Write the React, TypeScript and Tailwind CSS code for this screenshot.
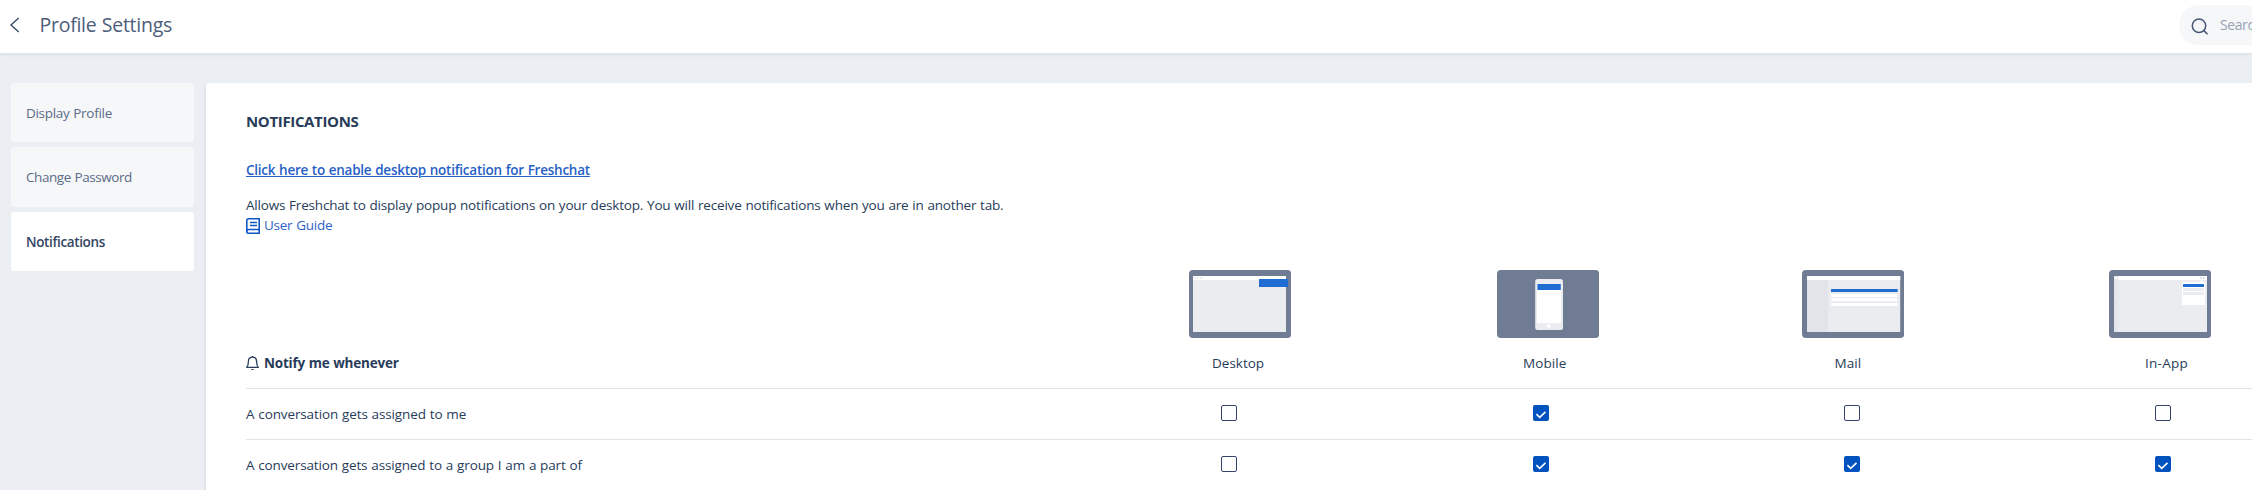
import type { ReactNode } from "react";

function Frame({ children }: { children: ReactNode }) {
  return (
    <svg width="102.3" height="68" viewBox="0 0 102.3 68" className="block shrink-0">
      <rect width="102.3" height="68" rx="4" fill="#6f7c93" />
      {children}
    </svg>
  );
}

function DesktopPreview() {
  return (
    <Frame>
      <rect x="4" y="6" width="93" height="56" fill="#ebecf0" />
      <rect x="4" y="6" width="93" height="4" fill="#fff" />
      <path d="M5 7h2v2h-2zM8 7h2v2h-2zM11 7h2v2h-2z" fill="#ebecf0" />
      <rect x="70" y="9" width="29" height="8" rx="0.6" fill="#1f6dd2" />
    </Frame>
  );
}

function MobilePreview() {
  return (
    <Frame>
      <rect x="38.2" y="9" width="27.8" height="51" rx="2.5" fill="#ebecf0" />
      <rect x="40" y="14" width="24" height="39" rx="1" fill="#fff" />
      <rect x="40.4" y="14" width="23.4" height="6" fill="#1f6dd2" />
      <circle cx="51.8" cy="56" r="2" fill="#fff" />
    </Frame>
  );
}

function MailPreview() {
  return (
    <Frame>
      <rect x="5" y="6" width="93.2" height="56" fill="#ebecf0" />
      <rect x="5" y="10" width="21.3" height="52" fill="#e1e4e9" />
      <rect x="5" y="6" width="93.2" height="4" fill="#fff" />
      <rect x="29" y="19" width="66.7" height="3" rx="0.5" fill="#1f6dd2" />
      <path d="M29.3 24h66v3h-66zM29.3 28.3h66v2.8h-66zM29.3 33h66v3h-66z" fill="#fff" />
    </Frame>
  );
}

function InAppPreview() {
  return (
    <Frame>
      <rect x="5" y="6" width="93" height="56" fill="#ebecf0" />
      <rect x="5" y="6" width="4" height="56" fill="#e4e6eb" />
      <rect x="9" y="6" width="89" height="4" fill="#fff" />
      <rect x="6" y="7" width="2" height="2" fill="#fff" />
      <path d="M6 14h2v2h-2zM6 20h2v2h-2zM6 26h2v2h-2z" fill="#ebecf0" />
      <path d="M91 7h2v2h-2zM94 7h2v2h-2z" fill="#dfe1e6" />
      <path d="M73 12h17.5l1.7-2 1.7 2H96v23H73z" fill="#fff" />
      <rect x="74" y="14" width="21" height="3" rx="0.5" fill="#1f6dd2" />
      <path d="M74 18h21v3h-21zM74 22h21v3h-21z" fill="#ebecf0" />
    </Frame>
  );
}

function Checkbox({ checked }: { checked: boolean }) {
  if (!checked) {
    return <span className="block size-4 rounded-[2px] border border-[#33436a] bg-white" />;
  }
  return (
    <span className="block size-4 rounded-[2px] bg-[#0052bf]">
      <svg width="16" height="16" viewBox="0 0 16 16" fill="none" className="block">
        <path d="M3.4 9.2l3.3 3.1 5.8-5.4" stroke="#fff" strokeWidth="1.6" />
      </svg>
    </span>
  );
}

const menu = [
  { label: "Display Profile", style: "h-[59px] pt-px bg-[#f5f7f9] text-[#5c6b87] tracking-[-0.29px]" },
  { label: "Change Password", style: "h-[60px] pb-px bg-[#f5f7f9] text-[#5c6b87] tracking-[-0.43px]" },
  { label: "Notifications", style: "h-[59px] pt-px bg-white font-semibold text-[#324563] tracking-[-0.36px]" },
];

const channels = [
  { label: "Desktop", tracking: "w-[311px]" },
  { label: "Mobile", tracking: "w-[311.500px] tracking-[0.1px]" },
  { label: "Mail", tracking: "w-[310.500px] tracking-[0.1px]" },
  { label: "In-App", tracking: "w-[311px] tracking-[0.25px]" },
];

const rows = [
  { label: "A conversation gets assigned to me", tracking: "tracking-[-0.12px]", on: [false, true, false, false] },
  { label: "A conversation gets assigned to a group I am a part of", tracking: "tracking-[-0.135px]", on: [false, true, true, true] },
];

export default function App() {
  return (
    <div className="flex h-[490px] w-full flex-col overflow-hidden bg-[#ebeef3] font-['Open_Sans',sans-serif] text-[13.5px] leading-5 [word-spacing:0.5px] text-[#283c5a]">
      <header className="flex h-[53px] shrink-0 justify-between bg-white shadow-[0_1px_4px_rgba(40,60,90,0.1)]">
        <div className="flex items-start">
          <svg width="10" height="16" viewBox="0 0 10 16" fill="none" className="mt-[17px] ml-[10px]">
            <path d="M8.7 1L1 7.9l7.7 7" stroke="#33466a" strokeWidth="1.3" />
          </svg>
          <h1 className="mt-[13px] ml-[19.5px] text-[19.5px] leading-6 tracking-[-0.26px] text-[#4d5d7b]">Profile Settings</h1>
        </div>
        <div className="mt-[5px] flex h-10 w-[73px] items-start overflow-hidden rounded-l-full bg-[#f5f7f9]">
          <svg width="18" height="18" viewBox="0 0 18 18" fill="none" className="mt-[13px] ml-[12px] shrink-0">
            <circle cx="8" cy="7.8" r="6.7" stroke="#475877" strokeWidth="1.5" />
            <path d="M12.6 12.4l4 3.8" stroke="#475877" strokeWidth="1.5" />
          </svg>
          <span className="mt-[10px] ml-[11px] text-sm tracking-[-0.4px] text-[#98a2b5]">Search</span>
        </div>
      </header>

      <div className="flex min-h-0 flex-1 pt-[30px]">
        <nav className="ml-[11px] flex w-[183px] shrink-0 flex-col gap-[5px]">
          {menu.map((item) => (
            <a key={item.label} className={`flex shrink-0 items-center rounded-[3px] pl-[15px] ${item.style}`}>
              {item.label}
            </a>
          ))}
        </nav>

        <main className="ml-3 min-w-0 flex-1 overflow-hidden rounded-tl-[4px] bg-white pt-7 pl-10 shadow-[0_2px_3px_rgba(40,60,90,0.18)]">
          <h2 className="text-[15px] font-bold tracking-[-0.35px]">NOTIFICATIONS</h2>
          <div className="mt-[29px]">
            <a className="font-semibold tracking-[-0.24px] text-[#2761c6] underline decoration-1 underline-offset-[1px]">
              Click here to enable desktop notification for Freshchat
            </a>
          </div>
          <p className="mt-[15px] tracking-[-0.187px]">
            Allows Freshchat to display popup notifications on your desktop. You will receive notifications when you are in another tab.
          </p>
          <a className="flex h-5 tracking-[-0.25px] text-[#2f62c5]">
            <svg width="14" height="16" viewBox="0 0 14 16" fill="none" stroke="#0f57c4" strokeWidth="1.6" className="mt-[3px] mr-1">
              <path d="M13.2 11.5V.8H2.5C1.500.8.8 1.500.8 2.500v11c0 1 .7 1.700 1.700 1.700H14" />
              <path d="M14 11.500H2.500C1.500 11.500.8 12.300.8 13.400M13.200 11.500v3.500" />
              <path d="M4 4.500h7M4 7.500h7" strokeWidth="1.300" />
            </svg>
            User Guide
          </a>

          <section className="mt-[35px]">
            <div className="flex w-[2200px] pl-[943px]">
              <div className="w-[307.6px]"><DesktopPreview /></div>
              <div className="w-[305.4px]"><MobilePreview /></div>
              <div className="w-[307px]"><MailPreview /></div>
              <div className="w-[307px]"><InAppPreview /></div>
            </div>
            <div className="flex h-[50px] pt-[15px]">
              <div className="flex w-[966px] shrink-0 font-bold tracking-[-0.22px]">
                <svg width="13" height="15" viewBox="0 0 13 15" fill="none" stroke="#283c5a" strokeWidth="1.3" className="mt-[3px] mr-[5px]">
                  <path d="M.7 11.400C2.300 9.800 2.400 8.300 2.400 5.600 2.400 3 4.200 1.200 6.500 1.200s4.100 1.800 4.100 4.400c0 2.700.1 4.200 1.700 5.800z" strokeLinejoin="round" />
                  <path d="M5 12.900c.3 1.300 2.700 1.300 3 0z" fill="#283c5a" stroke="none" />
                  <path d="M6.500 0v1.200" />
                </svg>
                Notify me whenever
              </div>
              {channels.map((c) => (
                <div key={c.label} className={`shrink-0 ${c.tracking}`}>{c.label}</div>
              ))}
            </div>
            {rows.map((row) => (
              <div key={row.label} className="flex h-[51px] border-t border-[#e0e3e7]">
                <div className={`w-[975px] shrink-0 pt-[15px] ${row.tracking}`}>{row.label}</div>
                {row.on.map((checked, i) => (
                  <div key={i} className="w-[311px] shrink-0 pt-4 nth-2:w-[312px]">
                    <Checkbox checked={checked} />
                  </div>
                ))}
              </div>
            ))}
          </section>
        </main>
      </div>
    </div>
  );
}
